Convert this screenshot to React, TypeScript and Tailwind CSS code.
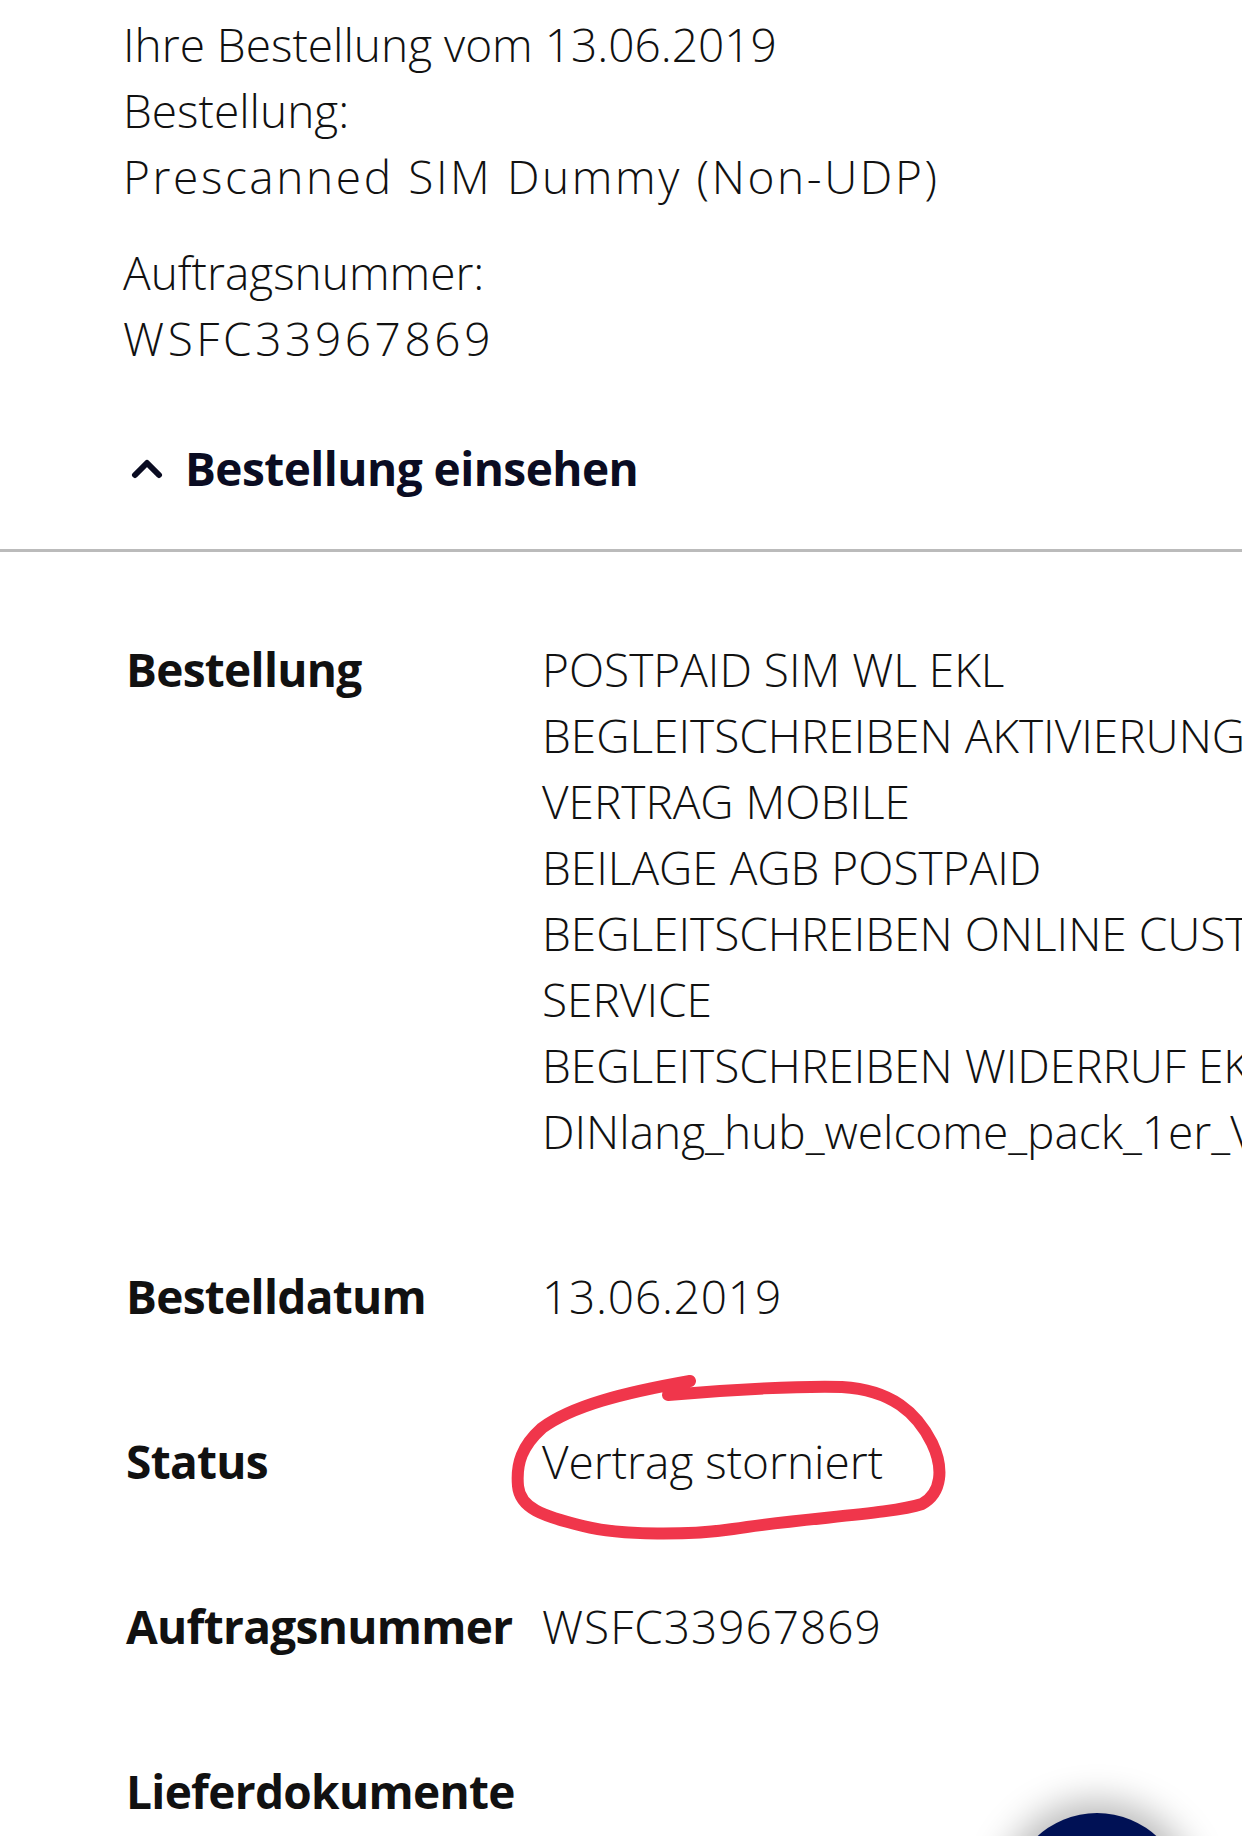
import React from "react";

const items = [
  "POSTPAID SIM WL EKL",
  "BEGLEITSCHREIBEN AKTIVIERUNG",
  "VERTRAG MOBILE",
  "BEILAGE AGB POSTPAID",
  "BEGLEITSCHREIBEN ONLINE CUSTOMER",
  "SERVICE",
  "BEGLEITSCHREIBEN WIDERRUF EKL",
  "DINlang_hub_welcome_pack_1er_Versand",
];

function Label({ children }: { children: React.ReactNode }) {
  return (
    <div className="w-[416px] shrink-0 font-bold text-[46px] leading-[66px] text-[#111] tracking-[-0.7px] whitespace-nowrap">
      {children}
    </div>
  );
}

function Ellipse() {
  return (
    <svg
      className="absolute left-[-40px] top-[-60px] pointer-events-none"
      width="460"
      height="180"
      viewBox="0 0 460 180"
      fill="none"
    >
      <path
        d="M166 27 C230 21 300 18 340 19 C390 22 415 45 430 75 C442 100 440 125 420 136 C390 146 300 150 231 161 C190 167 120 168 81 158 C40 148 18 140 16 118 C14 95 20 78 40 60 C70 38 120 25 188 13"
        stroke="#f0364b"
        strokeWidth="12"
        strokeLinecap="round"
        strokeLinejoin="round"
      />
    </svg>
  );
}

export default function App() {
  return (
    <div className="relative w-[1242px] h-[1836px] overflow-hidden bg-white text-[#111] font-['Open_Sans',sans-serif]">
      {/* header */}
      <div className="pl-[123px] pt-[11px]">
        <div className="font-light text-[46px] leading-[66px]">Ihre Bestellung vom 13.06.2019</div>
        <div className="font-light text-[46px] leading-[66px]">Bestellung:</div>
        <div className="font-light text-[46px] leading-[66px] tracking-[2.6px]">Prescanned SIM Dummy (Non-UDP)</div>
        <div className="mt-[30px] font-light text-[46px] leading-[66px]">Auftragsnummer:</div>
        <div className="font-light text-[46px] leading-[66px] tracking-[3.6px]">WSFC33967869</div>
        <div className="mt-[64px] flex items-center gap-[22px] pl-[8px] text-[#0a0c22]">
          <svg width="32" height="24" viewBox="0 0 32 24" fill="none">
            <path d="M4 19 L16 7 L28 19" stroke="currentColor" strokeWidth="6" strokeLinecap="round" strokeLinejoin="round" />
          </svg>
          <span className="font-bold text-[46px] leading-[66px] tracking-[-0.55px]">Bestellung einsehen</span>
        </div>
      </div>

      <div className="mt-[48px] h-[3px] bg-[#bbbbbb]" />

      {/* details */}
      <div className="pl-[126px] pt-[84px] flex flex-col gap-[99px]">
        <div className="flex">
          <Label>Bestellung</Label>
          <div className="font-light text-[46px] leading-[66px] whitespace-nowrap">
            {items.map((t) => (
              <div key={t}>{t}</div>
            ))}
          </div>
        </div>
        <div className="flex">
          <Label>Bestelldatum</Label>
          <div className="font-light text-[46px] leading-[66px] tracking-[0.8px]">13.06.2019</div>
        </div>
        <div className="flex">
          <Label>Status</Label>
          <div className="relative font-light text-[46px] leading-[66px]">
            Vertrag storniert
            <Ellipse />
          </div>
        </div>
        <div className="flex">
          <Label>Auftragsnummer</Label>
          <div className="font-light text-[46px] leading-[66px] tracking-[1px]">WSFC33967869</div>
        </div>
        <div className="flex">
          <Label>Lieferdokumente</Label>
        </div>
      </div>

      {/* floating action button */}
      <div className="absolute left-[1009px] top-[1813px] w-[176px] h-[176px] rounded-full bg-[#001155] shadow-[0_0_36px_12px_rgba(0,0,0,0.28)]" />
    </div>
  );
}
